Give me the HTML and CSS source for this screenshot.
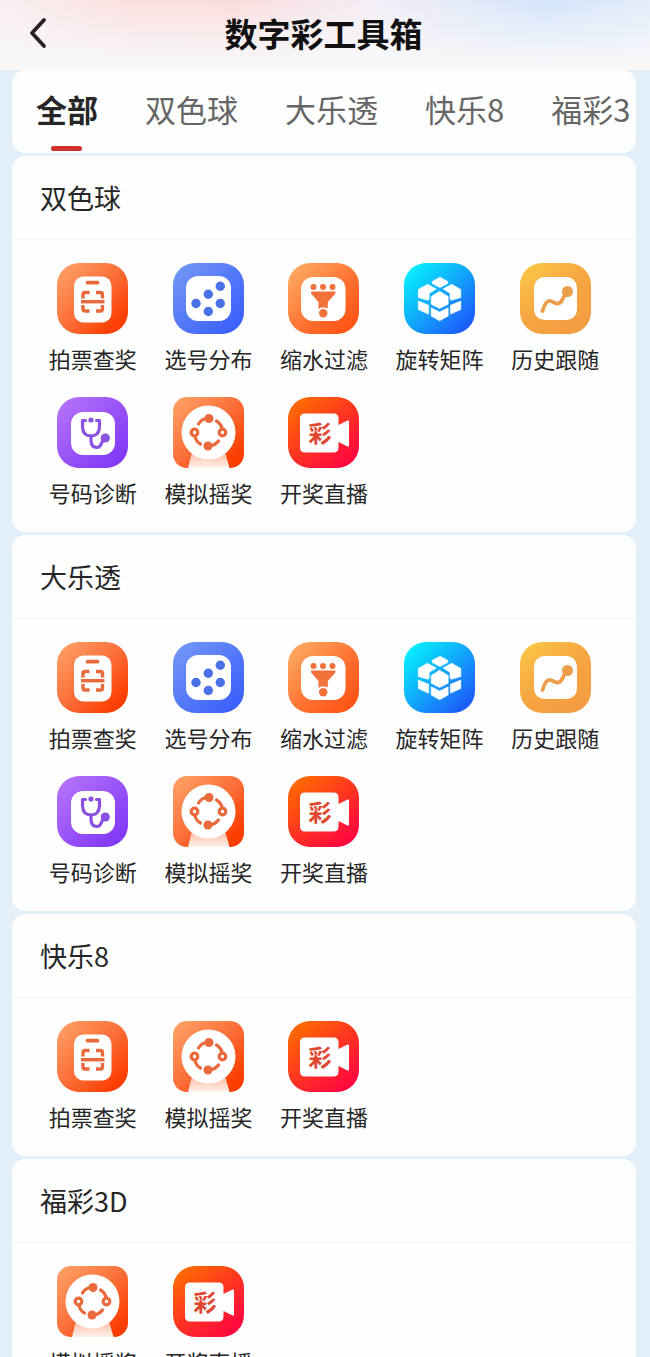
FILE: index.html
```html
<!DOCTYPE html>
<html lang="zh-CN">
<head>
<meta charset="utf-8">
<meta name="viewport" content="width=device-width, initial-scale=1">
<title>数字彩工具箱</title>
<link rel="stylesheet" href="styles.css">
</head>
<body>
<svg class="sprite" width="0" height="0" aria-hidden="true">
  <defs>
    <linearGradient id="g-orange" x1="0" y1="0" x2="1" y2="1"><stop offset="0" stop-color="#ffa56b"/><stop offset=".5" stop-color="#fb6e38"/><stop offset=".85" stop-color="#fc3f02"/><stop offset="1" stop-color="#f93a00"/></linearGradient>
    <linearGradient id="g-blue" x1="0" y1="0" x2="1" y2="1"><stop offset="0" stop-color="#759af6"/><stop offset="1" stop-color="#3459fb"/></linearGradient>
    <linearGradient id="g-filter" x1="0" y1="0" x2="1" y2="1"><stop offset="0" stop-color="#fdb268"/><stop offset=".6" stop-color="#ff6c2c"/><stop offset="1" stop-color="#ff4c0d"/></linearGradient>
    <linearGradient id="g-cyan" x1="0" y1="0" x2="1" y2="1"><stop offset=".05" stop-color="#05f5fd"/><stop offset=".5" stop-color="#12a5fb"/><stop offset="1" stop-color="#1f47fa"/></linearGradient>
    <linearGradient id="g-yellow" x1="0" y1="0" x2=".8" y2="1"><stop offset="0" stop-color="#fbcb45"/><stop offset=".5" stop-color="#f6a743"/><stop offset="1" stop-color="#f59b42"/></linearGradient>
    <linearGradient id="g-purple" x1="0" y1="0" x2="1" y2="1"><stop offset="0" stop-color="#b877fa"/><stop offset="1" stop-color="#7a31f5"/></linearGradient>
    <linearGradient id="g-red" x1=".1" y1="0" x2=".9" y2="1"><stop offset="0" stop-color="#ff7100"/><stop offset=".5" stop-color="#ff3421"/><stop offset="1" stop-color="#ff0046"/></linearGradient>
    <linearGradient id="g-beam" x1="0" y1="0" x2="0" y2="1"><stop offset="0" stop-color="#ffb9a0"/><stop offset="1" stop-color="#fff3ed"/></linearGradient>
  </defs>

  <symbol id="i-scan" viewBox="0 0 71 71">
    <rect width="71" height="71" rx="22" fill="url(#g-orange)"/>
    <rect x="17" y="13.5" width="37.500" height="46" rx="9.500" fill="#fff"/>
    <g fill="none" stroke="#e8693b" stroke-width="3.400">
      <path d="M30.500 19.700H40.500" stroke-width="3.800" stroke-linecap="round"/>
      <path d="M24 38.700H47.500"/>
      <path d="M26 35.500V31.500Q26 29.500 28 29.500H32.500M39 29.500H43.500Q45.500 29.500 45.500 31.500V35.500M45.500 42V46Q45.500 48 43.500 48H39M32.500 48H28Q26 48 26 46V42"/>
    </g>
  </symbol>

  <symbol id="i-dots" viewBox="0 0 71 71">
    <rect width="71" height="71" rx="22" fill="url(#g-blue)"/>
    <rect x="13" y="13" width="45" height="45" rx="12" fill="#fff"/>
    <g fill="#4a70e8"><circle cx="47.300" cy="23.300" r="4.700"/><circle cx="35.300" cy="31.300" r="4.700"/><circle cx="23" cy="40.500" r="4.700"/><circle cx="47.300" cy="40.500" r="4.700"/><circle cx="35.300" cy="48.500" r="4.700"/></g>
  </symbol>

  <symbol id="i-filter" viewBox="0 0 71 71">
    <rect width="71" height="71" rx="22" fill="url(#g-filter)"/>
    <rect x="13" y="14" width="44.500" height="44" rx="12" fill="#fff"/>
    <g fill="#f2703a"><circle cx="25.500" cy="24" r="3"/><circle cx="35" cy="24" r="3"/><circle cx="44.500" cy="24" r="3"/><path d="M23.500 28.500H47Q48.300 29.500 47 31L39.800 39V45.500L37.500 44.500H33L30.500 46V39L23.500 31Q22.200 29.500 23.500 28.500Z"/><circle cx="35.200" cy="50.300" r="4.200"/></g>
  </symbol>

  <symbol id="i-matrix" viewBox="0 0 71 71">
    <rect width="71" height="71" rx="22" fill="url(#g-cyan)"/>
    <g fill="#fff" stroke="#fff" stroke-width=".6" stroke-linejoin="round">
      <path d="M36 14.200L43.800 18.500V20.500L36 24.500L28.200 20.500V18.500Z"/>
      <path d="M23.500 21.200L32.300 26L25.200 30.300V36.300L23.800 37.300L14.300 34.500V26.500Z"/>
      <path d="M47.700 21.200L39 26L46 30.300V36.300L47.400 37.300L56.800 34.500V26.500Z"/>
      <path d="M35.600 28.300L44.200 33.500V41.200L35.600 45.500L27.200 41.200V33.500Z"/>
      <path d="M14.300 38L24.700 42.300V51.200L14.300 46.500Z"/>
      <path d="M56.800 38L46.400 42.300V51.200L56.800 46.500Z"/>
      <path d="M27.200 44.800L35.600 49L44.200 44.800V53L35.600 57.800L27.200 53Z"/>
    </g>
  </symbol>

  <symbol id="i-trend" viewBox="0 0 71 71">
    <rect width="71" height="71" rx="22" fill="url(#g-yellow)"/>
    <rect x="14" y="14" width="43" height="43" rx="10.500" fill="#fff"/>
    <path d="M22.500 48C24 43 26 37.800 29.500 37.800C33 37.800 34 41 38 40.500C43.500 39.500 41 35 47 29.500" fill="none" stroke="#eb9d4a" stroke-width="3.800" stroke-linecap="round"/>
    <circle cx="47.500" cy="28.500" r="5.500" fill="#eb9d4a"/>
  </symbol>

  <symbol id="i-doctor" viewBox="0 0 71 71">
    <rect width="71" height="71" rx="22" fill="url(#g-purple)"/>
    <rect x="14" y="15" width="44" height="43" rx="12" fill="#fff"/>
    <g fill="none" stroke="#8a50e0" stroke-width="3.200" stroke-linecap="round" stroke-linejoin="round">
      <path d="M28.500 23.500H25.500V30Q26 39 34 39Q42 39 42.500 30V23.500H39.500"/>
      <path d="M34 39V43Q34 50.500 40 50.500C45.500 50.500 43.500 43 48 42"/>
    </g>
    <circle cx="34" cy="23" r="2.600" fill="#8a50e0"/><circle cx="48.300" cy="41" r="4.600" fill="#8a50e0"/>
  </symbol>

  <symbol id="i-shake" viewBox="0 0 71 71">
    <rect width="71" height="71" rx="14" fill="url(#g-orange)"/>
    <path d="M19 55H52L56.500 71H15Z" fill="url(#g-beam)"/>
    <circle cx="35.500" cy="35.500" r="27" fill="#fff"/>
    <g fill="none" stroke="#ea6a3d" stroke-width="3.200" stroke-linecap="round">
      <path d="M34 21.500Q28.500 22 25.500 27"/>
      <path d="M43.500 24Q48 26.500 49.200 32"/>
      <path d="M37 49Q42.500 48 45.500 44"/>
      <path d="M27.500 47Q23 44.500 21.800 39"/>
      <circle cx="21.500" cy="35.500" r="3.300" fill="#fff"/><circle cx="49.500" cy="35.500" r="3.300" fill="#fff"/>
    </g>
    <circle cx="36" cy="21.500" r="4.500" fill="#ea6a3d"/><circle cx="35" cy="49" r="4.500" fill="#ea6a3d"/>
  </symbol>

  <symbol id="i-live" viewBox="0 0 71 71">
    <rect width="71" height="71" rx="22" fill="url(#g-red)"/>
    <path d="M17 16.500H45.500Q50.500 16.500 50.500 21.500V28L59.500 23.500Q61 23 61 24.500V48.500Q61 50 59.500 49.500L50.500 45V50.500Q50.500 55.500 45.500 55.500H17Q12 55.500 12 50.500V21.500Q12 16.500 17 16.500Z" fill="#fff"/>
    <text class="live-mark" x="32" y="45" text-anchor="middle">彩</text>
  </symbol>
</svg>

<div class="app">
  <header class="topbar">
    <button class="back" type="button" aria-label="返回">
      <svg width="20" height="32" viewBox="0 0 20 32" aria-hidden="true"><path d="M16 3L4 16L16 29" fill="none" stroke="#2b2021" stroke-width="3.800" stroke-linecap="round" stroke-linejoin="round"/></svg>
    </button>
    <h1 class="page-title">数字彩工具箱</h1>
  </header>

  <main class="content">
    <nav class="tabs" aria-label="彩种">
      <div class="tabs-scroll">
        <button class="tab tab-active" type="button" aria-current="true">全部</button>
        <button class="tab" type="button">双色球</button>
        <button class="tab" type="button">大乐透</button>
        <button class="tab" type="button">快乐8</button>
        <button class="tab" type="button">福彩3D</button>
      </div>
    </nav>

    <section class="card">
      <h2 class="card-title">双色球</h2>
      <div class="tools">
        <a class="tool" href="#"><svg class="icon" aria-hidden="true"><use href="#i-scan"/></svg><span class="label">拍票查奖</span></a>
        <a class="tool" href="#"><svg class="icon" aria-hidden="true"><use href="#i-dots"/></svg><span class="label">选号分布</span></a>
        <a class="tool" href="#"><svg class="icon" aria-hidden="true"><use href="#i-filter"/></svg><span class="label">缩水过滤</span></a>
        <a class="tool" href="#"><svg class="icon" aria-hidden="true"><use href="#i-matrix"/></svg><span class="label">旋转矩阵</span></a>
        <a class="tool" href="#"><svg class="icon" aria-hidden="true"><use href="#i-trend"/></svg><span class="label">历史跟随</span></a>
        <a class="tool" href="#"><svg class="icon" aria-hidden="true"><use href="#i-doctor"/></svg><span class="label">号码诊断</span></a>
        <a class="tool" href="#"><svg class="icon" aria-hidden="true"><use href="#i-shake"/></svg><span class="label">模拟摇奖</span></a>
        <a class="tool" href="#"><svg class="icon" aria-hidden="true"><use href="#i-live"/></svg><span class="label">开奖直播</span></a>
      </div>
    </section>

    <section class="card">
      <h2 class="card-title">大乐透</h2>
      <div class="tools">
        <a class="tool" href="#"><svg class="icon" aria-hidden="true"><use href="#i-scan"/></svg><span class="label">拍票查奖</span></a>
        <a class="tool" href="#"><svg class="icon" aria-hidden="true"><use href="#i-dots"/></svg><span class="label">选号分布</span></a>
        <a class="tool" href="#"><svg class="icon" aria-hidden="true"><use href="#i-filter"/></svg><span class="label">缩水过滤</span></a>
        <a class="tool" href="#"><svg class="icon" aria-hidden="true"><use href="#i-matrix"/></svg><span class="label">旋转矩阵</span></a>
        <a class="tool" href="#"><svg class="icon" aria-hidden="true"><use href="#i-trend"/></svg><span class="label">历史跟随</span></a>
        <a class="tool" href="#"><svg class="icon" aria-hidden="true"><use href="#i-doctor"/></svg><span class="label">号码诊断</span></a>
        <a class="tool" href="#"><svg class="icon" aria-hidden="true"><use href="#i-shake"/></svg><span class="label">模拟摇奖</span></a>
        <a class="tool" href="#"><svg class="icon" aria-hidden="true"><use href="#i-live"/></svg><span class="label">开奖直播</span></a>
      </div>
    </section>

    <section class="card">
      <h2 class="card-title">快乐8</h2>
      <div class="tools">
        <a class="tool" href="#"><svg class="icon" aria-hidden="true"><use href="#i-scan"/></svg><span class="label">拍票查奖</span></a>
        <a class="tool" href="#"><svg class="icon" aria-hidden="true"><use href="#i-shake"/></svg><span class="label">模拟摇奖</span></a>
        <a class="tool" href="#"><svg class="icon" aria-hidden="true"><use href="#i-live"/></svg><span class="label">开奖直播</span></a>
      </div>
    </section>

    <section class="card">
      <h2 class="card-title">福彩3D</h2>
      <div class="tools">
        <a class="tool" href="#"><svg class="icon" aria-hidden="true"><use href="#i-shake"/></svg><span class="label">模拟摇奖</span></a>
        <a class="tool" href="#"><svg class="icon" aria-hidden="true"><use href="#i-live"/></svg><span class="label">开奖直播</span></a>
      </div>
    </section>
  </main>
</div>
</body>
</html>
```

FILE: styles.css
```css
* {
  box-sizing: border-box;
}

body {
  margin: 0;
  background: #e4f0f9;
  color: #262626;
  font-family: "Noto Sans CJK SC", sans-serif;
}

.sprite {
  position: absolute;
}

.app {
  display: flex;
  flex-direction: column;
  height: 100vh;
}

.topbar {
  display: grid;
  grid-template-columns: 80px 1fr 83px;
  align-items: center;
  flex: none;
  height: 70px;
  padding-bottom: 5px;
  background:
    linear-gradient(to bottom, rgba(248, 248, 249, 0) 0%, #f8f8f9 90%),
    linear-gradient(to right, #f9eff0 0%, #fbdfe0 20%, #fbdcdd 36%, #f3eef6 58%, #d3e4fb 84%, #e2ecfa 100%);
}

.back {
  display: flex;
  align-items: center;
  height: 60px;
  padding: 0 0 0 28px;
  border: 0;
  background: none;
  cursor: pointer;
}

.page-title {
  margin: 0;
  color: #111;
  font-size: 33px;
  font-weight: 700;
  line-height: 48px;
  text-align: center;
}

.content {
  display: flex;
  flex: 1;
  flex-direction: column;
  gap: 3px;
  min-height: 0;
  padding: 0 14px 0 12px;
  overflow-y: auto;
  scrollbar-width: none;
}

.tabs,
.card {
  flex: none;
  border-radius: 14px;
  background: #fefefe;
}

.tabs {
  padding: 0 3px 0 24px;
}

.tabs-scroll {
  display: flex;
  gap: 47px;
  overflow-x: auto;
  scrollbar-width: none;
}

.tab {
  position: relative;
  flex: none;
  height: 83px;
  padding: 0 0 5px;
  border: 0;
  background: none;
  color: #666;
  font-family: inherit;
  font-size: 31px;
  line-height: 44px;
  cursor: pointer;
}

.tab-active {
  color: #262626;
  font-weight: 700;
}

.tab-active::after {
  position: absolute;
  bottom: 2px;
  left: 50%;
  width: 31px;
  height: 5px;
  margin-left: -16px;
  border-radius: 3px;
  background: #d0302f;
  content: "";
}

.card-title {
  height: 84px;
  margin: 0;
  padding: 0 28px;
  border-bottom: 1px solid #f5f5f6;
  font-size: 27px;
  font-weight: 400;
  line-height: 83px;
}

.tools {
  display: grid;
  grid-template-columns: repeat(5, 1fr);
  row-gap: 23px;
  padding: 23px 23px 24px;
}

.tool {
  display: flex;
  flex-direction: column;
  align-items: center;
  gap: 8px;
  color: inherit;
  text-decoration: none;
}

.icon {
  width: 71px;
  height: 71px;
}

.label {
  font-size: 22px;
  line-height: 32px;
  white-space: nowrap;
}

.live-mark {
  fill: #e0452e;
  font-family: "Noto Sans CJK SC", sans-serif;
  font-size: 23px;
  font-weight: 700;
}
```
